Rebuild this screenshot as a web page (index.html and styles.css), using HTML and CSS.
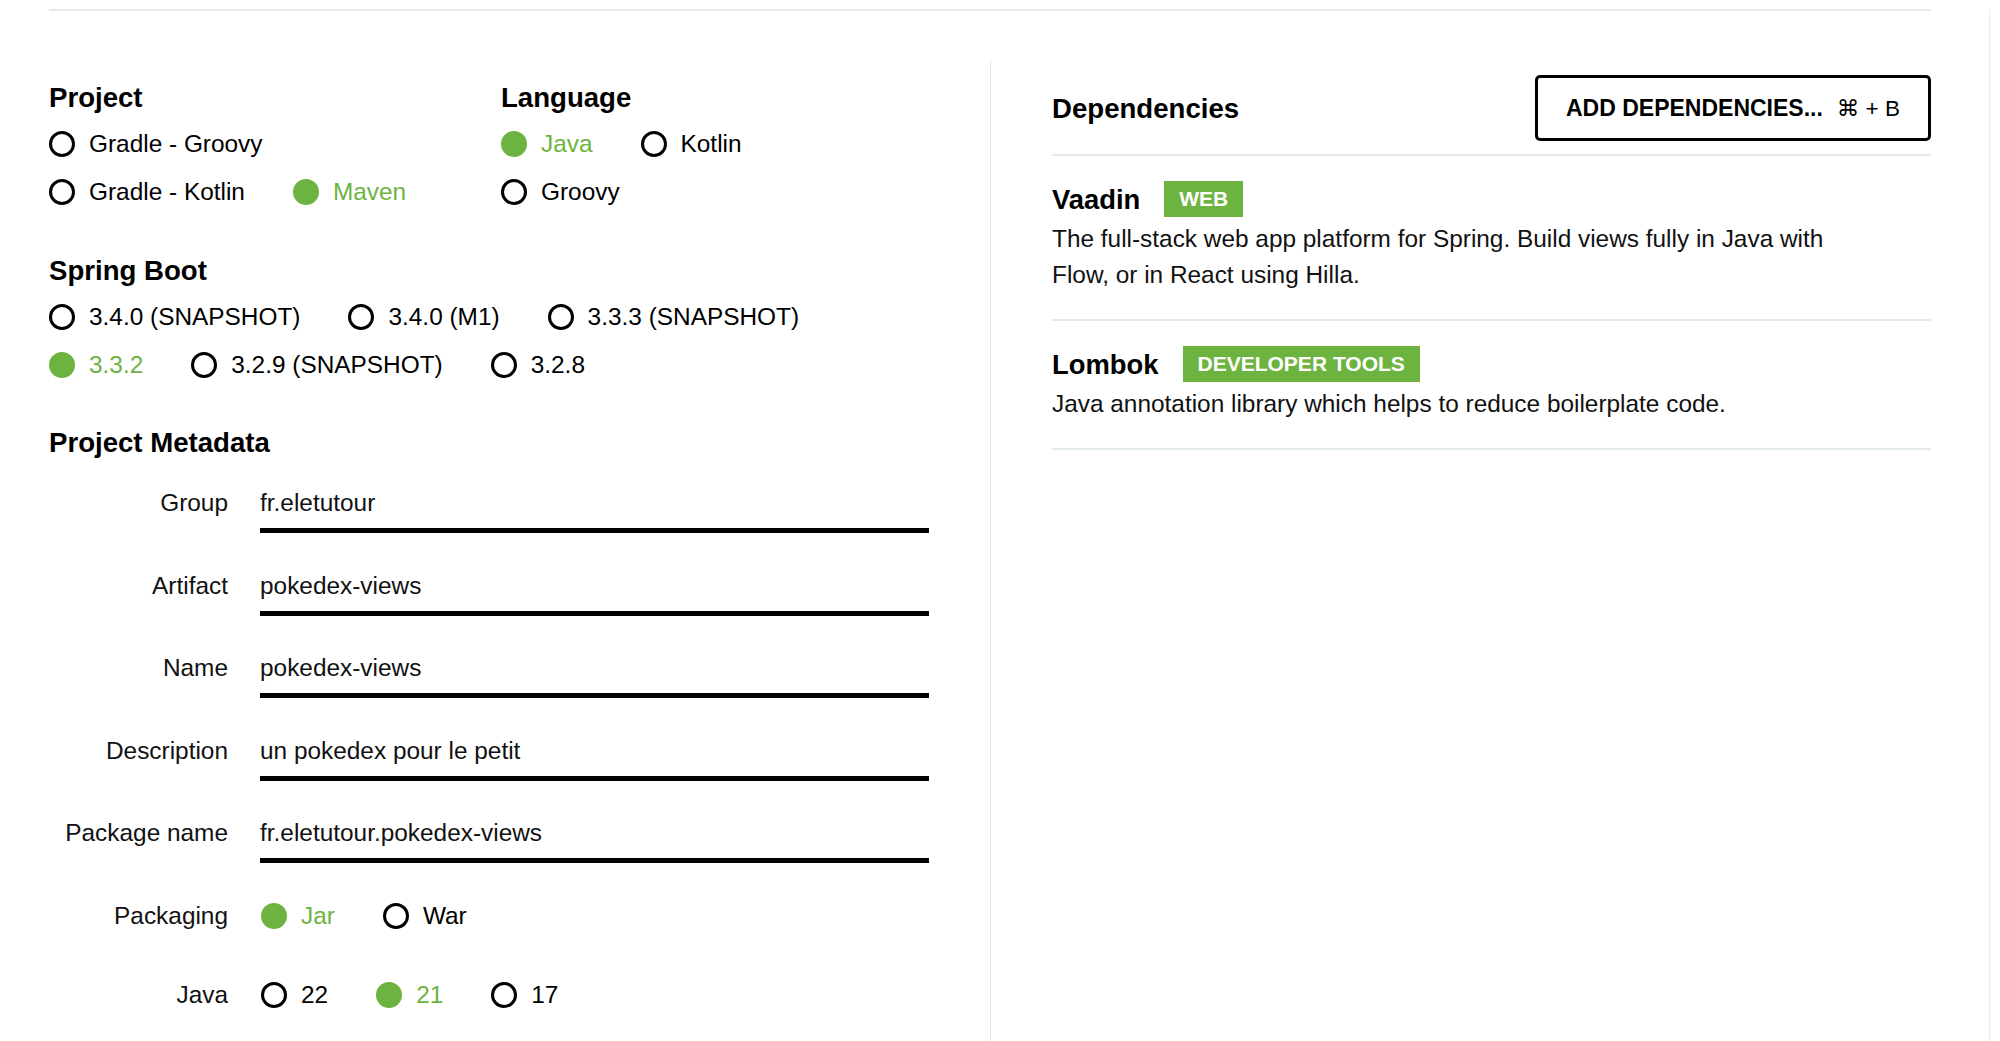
FILE: index.html
```html
<!DOCTYPE html>
<html lang="en">
<head>
<meta charset="utf-8">
<title>Spring Initializr</title>
<link rel="stylesheet" href="styles.css">
</head>
<body>
<div class="frame">
  <div class="page">
    <div class="rule"></div>
    <div class="main">
      <div class="left">
        <div class="top-row">
          <section class="group project">
            <h2 class="heading">Project</h2>
            <div class="radio-row">
              <label class="radio"><span class="dot"></span><span class="txt">Gradle - Groovy</span></label>
            </div>
            <div class="radio-row">
              <label class="radio"><span class="dot"></span><span class="txt">Gradle - Kotlin</span></label>
              <label class="radio checked"><span class="dot"></span><span class="txt">Maven</span></label>
            </div>
          </section>
          <section class="group language">
            <h2 class="heading">Language</h2>
            <div class="radio-row">
              <label class="radio checked"><span class="dot"></span><span class="txt">Java</span></label>
              <label class="radio"><span class="dot"></span><span class="txt">Kotlin</span></label>
            </div>
            <div class="radio-row">
              <label class="radio"><span class="dot"></span><span class="txt">Groovy</span></label>
            </div>
          </section>
        </div>

        <section class="group boot">
          <h2 class="heading">Spring Boot</h2>
          <div class="radio-row">
            <label class="radio"><span class="dot"></span><span class="txt">3.4.0 (SNAPSHOT)</span></label>
            <label class="radio"><span class="dot"></span><span class="txt">3.4.0 (M1)</span></label>
            <label class="radio"><span class="dot"></span><span class="txt">3.3.3 (SNAPSHOT)</span></label>
          </div>
          <div class="radio-row">
            <label class="radio checked"><span class="dot"></span><span class="txt">3.3.2</span></label>
            <label class="radio"><span class="dot"></span><span class="txt">3.2.9 (SNAPSHOT)</span></label>
            <label class="radio"><span class="dot"></span><span class="txt">3.2.8</span></label>
          </div>
        </section>

        <section class="group meta">
          <h2 class="heading">Project Metadata</h2>
          <div class="fields">
            <div class="field"><span class="flabel">Group</span><div class="input">fr.eletutour</div></div>
            <div class="field"><span class="flabel">Artifact</span><div class="input">pokedex-views</div></div>
            <div class="field"><span class="flabel">Name</span><div class="input">pokedex-views</div></div>
            <div class="field"><span class="flabel">Description</span><div class="input">un pokedex pour le petit</div></div>
            <div class="field last"><span class="flabel">Package name</span><div class="input">fr.eletutour.pokedex-views</div></div>
            <div class="field choice packaging">
              <span class="flabel">Packaging</span>
              <div class="choices">
                <label class="radio checked"><span class="dot"></span><span class="txt">Jar</span></label>
                <label class="radio"><span class="dot"></span><span class="txt">War</span></label>
              </div>
            </div>
            <div class="field choice">
              <span class="flabel">Java</span>
              <div class="choices">
                <label class="radio"><span class="dot"></span><span class="txt">22</span></label>
                <label class="radio checked"><span class="dot"></span><span class="txt">21</span></label>
                <label class="radio"><span class="dot"></span><span class="txt">17</span></label>
              </div>
            </div>
          </div>
        </section>
      </div>

      <div class="right">
        <div class="dep-head">
          <h2 class="heading">Dependencies</h2>
          <button class="add-btn"><span class="add-label">ADD DEPENDENCIES...</span><span class="shortcut">⌘ + B</span></button>
        </div>
        <div class="dep">
          <div class="dep-title"><span class="dep-name">Vaadin</span><span class="badge">WEB</span></div>
          <p class="dep-desc">The full-stack web app platform for Spring. Build views fully in Java with Flow, or in React using Hilla.</p>
        </div>
        <div class="dep">
          <div class="dep-title"><span class="dep-name">Lombok</span><span class="badge">DEVELOPER TOOLS</span></div>
          <p class="dep-desc">Java annotation library which helps to reduce boilerplate code.</p>
        </div>
      </div>
    </div>
  </div>
</div>
</body>
</html>
```

FILE: styles.css
```css
html, body {
  margin: 0;
  padding: 0;
  background: #fff;
  overflow: hidden;
}

body {
  font-family: "Liberation Sans", Arial, sans-serif;
  color: #000;
  font-size: 24.4px;
}

.frame {
  width: 1990px;
  height: 1041px;
  border-right: 1px solid #e6ecec;
  box-sizing: border-box;
}

.page {
  margin-left: 49px;
  width: 1882px;
}

.rule {
  height: 2px;
  background: #e1e9e9;
  margin-top: 9px;
}

.main {
  margin-top: 49px;
  display: grid;
  grid-template-columns: 941px 941px;
  height: 981px;
}

.heading {
  margin: 0;
  font-size: 27.6px;
  line-height: 31px;
  font-weight: bold;
  color: #000;
}

/* ---------- left ---------- */
.left {
  padding-top: 22px;
}

.top-row {
  display: flex;
}

.project {
  width: 452px;
}

.group .heading {
  margin-bottom: 7px;
}

.radio-row {
  display: flex;
  align-items: center;
  height: 48px;
}

.radio {
  display: inline-flex;
  align-items: center;
  margin-right: 48px;
  font-size: 24.4px;
  line-height: 36px;
  color: #000;
}

.dot {
  width: 26px;
  height: 26px;
  box-sizing: border-box;
  border: 3px solid #000;
  border-radius: 50%;
  flex: none;
}

.txt {
  margin-left: 14px;
}

.radio.checked .dot {
  background: #6db33f;
  border-color: #6db33f;
}

.radio.checked .txt {
  color: #6db33f;
}

.boot {
  margin-top: 39px;
}

.meta {
  margin-top: 38px;
}

.fields {
  margin-top: 27px;
}

.field {
  display: grid;
  grid-template-columns: 179px 669px;
  column-gap: 32px;
  align-items: start;
  margin-bottom: 34.5px;
}

.field.last {
  margin-bottom: 35px;
}

.field.packaging {
  margin-bottom: 43px;
}

.flabel {
  text-align: right;
  font-size: 24.4px;
  line-height: 36px;
  color: #111;
}

.input {
  font-size: 24.4px;
  line-height: 36px;
  padding-bottom: 7px;
  border-bottom: 5px solid #000;
  color: #111;
}

.choices {
  display: flex;
  align-items: center;
  height: 36px;
  padding-left: 1px;
}

/* ---------- right ---------- */
.right {
  border-left: 1px solid #dfe9e9;
  padding-left: 61px;
}

.dep-head {
  display: flex;
  justify-content: space-between;
  align-items: center;
  padding: 15px 0 13px;
  border-bottom: 2px solid #e3ebeb;
}

.add-btn {
  width: 396px;
  height: 66px;
  box-sizing: border-box;
  border: 3px solid #000;
  border-radius: 5px;
  background: #fff;
  color: #000;
  display: flex;
  align-items: center;
  justify-content: center;
  padding: 0;
  font-family: "Liberation Sans", Arial, sans-serif;
  cursor: pointer;
}

.add-label {
  font-size: 23px;
  font-weight: bold;
}

.shortcut {
  margin-left: 14px;
  font-size: 22.5px;
  font-weight: normal;
  font-family: "Liberation Sans", "DejaVu Sans", sans-serif;
}

.dep {
  padding: 25px 0 26px;
  border-bottom: 2px solid #e3ebeb;
}

.dep-title {
  display: flex;
  align-items: center;
  height: 36px;
}

.dep-name {
  font-size: 27.4px;
  line-height: 31px;
  font-weight: bold;
  margin-right: 24px;
}

.badge {
  background: #6db33f;
  color: #fff;
  font-size: 21px;
  font-weight: bold;
  line-height: 36px;
  padding: 0 15px;
}

.dep-desc {
  margin: 4px 0 0;
  font-size: 24.4px;
  line-height: 36px;
  max-width: 800px;
  color: #111;
}
```
